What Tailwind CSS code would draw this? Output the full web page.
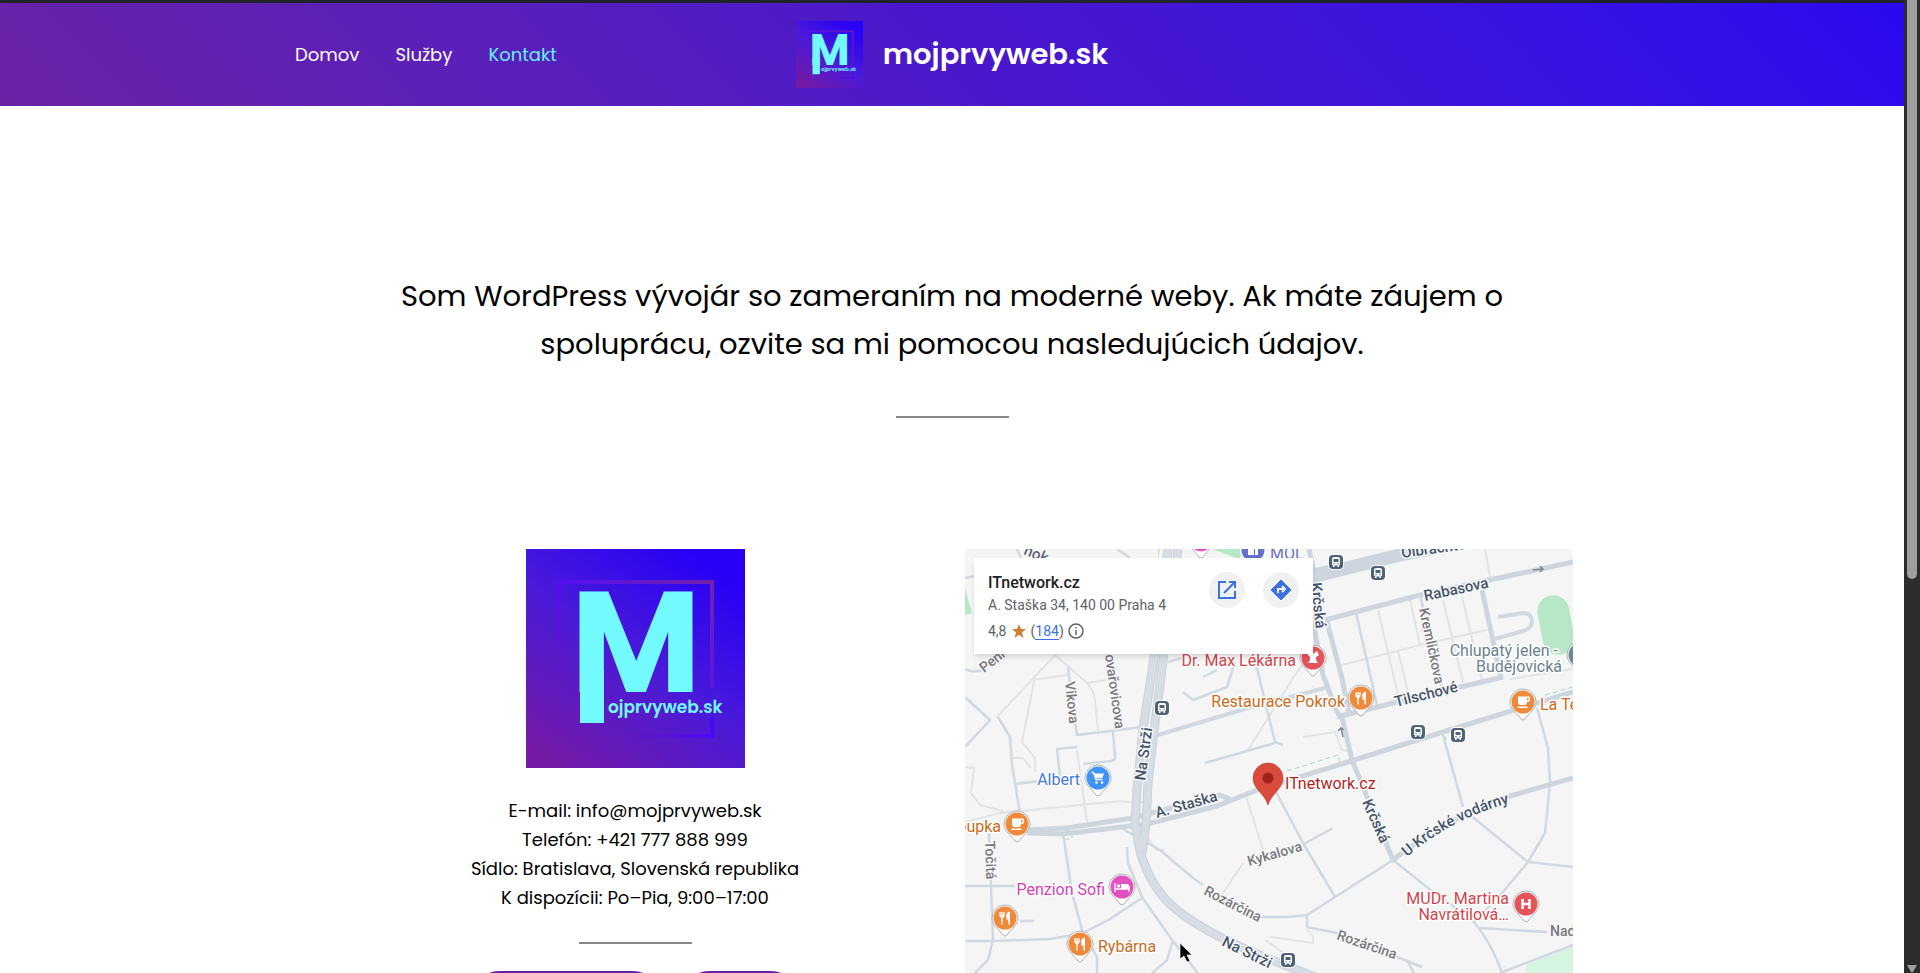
<!DOCTYPE html>
<html lang="sk">
<head>
  <meta charset="UTF-8">
  <meta name="viewport" content="width=device-width, initial-scale=1.0">
  <title>Kontakt – mojprvyweb.sk</title>
  <!-- Tailwind CSS -->
  <script src="https://cdn.jsdelivr.net/npm/@tailwindcss/browser@4"></script>
</head>
<body class="flex h-screen overflow-hidden bg-white text-black font-[Poppins,Inter,sans-serif]">

  <!-- Logo a ikony mapy -->
  <svg class="absolute size-0" aria-hidden="true">
    <defs>
      <linearGradient id="logoBg" x1="0.15" y1="1" x2="0.85" y2="0">
        <stop offset="0" stop-color="#741aa6"/>
        <stop offset="0.5" stop-color="#4a1ad8"/>
        <stop offset="0.95" stop-color="#2800f6"/>
      </linearGradient>
      <linearGradient id="frameTop" gradientUnits="userSpaceOnUse" x1="31" y1="0" x2="188" y2="0">
        <stop offset="0" stop-color="#540cf6"/>
        <stop offset="1" stop-color="#7422a8"/>
      </linearGradient>
      <linearGradient id="frameRight" gradientUnits="userSpaceOnUse" x1="0" y1="31" x2="0" y2="139">
        <stop offset="0" stop-color="#7422a8"/>
        <stop offset="1" stop-color="#5c14e0"/>
      </linearGradient>
      <linearGradient id="frameLeft" gradientUnits="userSpaceOnUse" x1="0" y1="31" x2="0" y2="165">
        <stop offset="0" stop-color="#540cf6"/>
        <stop offset="1" stop-color="#6a1cb4" stop-opacity="0"/>
      </linearGradient>
      <linearGradient id="frameBottom" gradientUnits="userSpaceOnUse" x1="60" y1="0" x2="188" y2="0">
        <stop offset="0" stop-color="#6a1cb4" stop-opacity="0"/>
        <stop offset="1" stop-color="#4a08fa"/>
      </linearGradient>

      <symbol id="logo" viewBox="0 0 219 219">
        <rect width="219" height="219" fill="url(#logoBg)"/>
        <rect x="31" y="31" width="4" height="134" fill="url(#frameLeft)"/>
        <rect x="31" y="31" width="157" height="4" fill="url(#frameTop)"/>
        <rect x="184" y="31" width="4" height="108" fill="url(#frameRight)"/>
        <rect x="184" y="168" width="4" height="21" fill="#4a08fa"/>
        <rect x="60" y="185" width="128" height="4" fill="url(#frameBottom)"/>
        <text x="110" y="143" font-family="Poppins, Inter, sans-serif" font-size="142" font-weight="700" text-anchor="middle" fill="#73faff">M</text>
        <rect x="54" y="120" width="24" height="54" fill="#73faff"/>
        <text x="82" y="164" font-family="Poppins, Inter, sans-serif" font-size="17" font-weight="600" fill="#73faff">ojprvyweb.sk</text>
      </symbol>

      <symbol id="bus" viewBox="-9 -9 18 18" overflow="visible">
        <rect x="-8" y="-8" width="16" height="16" rx="5" fill="#fff"/>
        <rect x="-7" y="-7" width="14" height="14" rx="4" fill="#4d6177"/>
        <path d="M-4 3V-3Q-4-5-2-5H2Q4-5 4-3V3H3V5H1.5V3.5H-1.5V5H-3V3Z" fill="#fff"/>
        <path d="M-2.5-3H2.5V0H-2.5Z" fill="#4d6177"/>
        <circle cx="-2" cy="1.8" r=".7" fill="#4d6177"/>
        <circle cx="2" cy="1.8" r=".7" fill="#4d6177"/>
      </symbol>
      <symbol id="pin" viewBox="-14 -14 28 34" overflow="visible">
        <path d="M-13 0A13 13 0 1 1 13 0C13 7 6 11 2 17Q0 19-2 17C-6 11-13 7-13 0Z" fill="#fff" stroke="#a4a8ac" stroke-width=".9"/>
        <circle r="11.5" fill="currentColor"/>
      </symbol>
      <symbol id="fork" viewBox="-8 -8 16 16" overflow="visible">
        <path d="M-5-6V-2.500M-3-6V0M-1-6V-2.500M-3 0V6.500" fill="none" stroke="#fff" stroke-width="1.300"/>
        <path d="M-5.600-3H-.4Q-.4 0-3 0T-5.600-3ZM5-6.500V6.500H3.400V1.500H1.300V-3Q1.500-6 5-6.500Z" fill="#fff"/>
      </symbol>
      <symbol id="cup" viewBox="-8 -8 16 16" overflow="visible">
        <path d="M-5-5.500H6Q7-5.500 7-4V-2Q7 0 4 0Q4 3 1.500 3H-2.500Q-5 3-5 0ZM4-4V-1.500H5.500V-4ZM-5.500 4.500H4.500V6H-5.500Z" fill="#fff" fill-rule="evenodd"/>
      </symbol>
    </defs>
  </svg>

  <div class="flex min-w-0 flex-1 flex-col overflow-hidden border-t-3 border-[#20242a]">
    <header class="shrink-0 bg-linear-45 from-[#6b21a6] via-[#4a17cb] to-[#2a08f0]">
      <div class="mx-auto grid h-[103px] max-w-[1314px] grid-cols-[1fr_auto_1fr] items-center">
        <nav class="flex gap-9 text-lg text-white">
          <a href="#domov">Domov</a>
          <a href="#sluzby">Služby</a>
          <a href="#kontakt" class="text-[#66f0f5]" aria-current="page">Kontakt</a>
        </nav>
        <a href="#domov" class="flex items-center gap-5 text-[29px] font-semibold text-white">
          <svg class="size-[67px]" aria-hidden="true"><use href="#logo"/></svg>
          mojprvyweb.sk
        </a>
      </div>
    </header>

    <main class="mx-auto w-full max-w-[1242px] pt-[166px]">
      <p class="mx-auto max-w-[1160px] text-center text-[29px] leading-12">Som WordPress vývojár so zameraním na moderné weby. Ak máte záujem o spoluprácu, ozvite sa mi pomocou nasledujúcich údajov.</p>
      <hr class="mx-auto mt-12 w-[113px] border-t-2 border-[#888]">

      <div class="mt-[131px] grid grid-cols-2 gap-[26px]">
        <section class="text-center">
          <svg class="mx-auto size-[219px]" role="img" aria-label="Logo"><use href="#logo"/></svg>
          <p class="mt-7 text-lg leading-[29px]">
            E-mail: info@mojprvyweb.sk<br>
            Telefón: +421 777 888 999<br>
            Sídlo: Bratislava, Slovenská republika<br>
            K dispozícii: Po–Pia, 9:00–17:00
          </p>
          <hr class="mx-auto mt-[30px] w-[113px] border-t-2 border-[#888]">
          <div class="mt-[27px] flex justify-center gap-5">
            <button type="button" aria-label="E-mail" class="h-14 w-[190px] rounded-full bg-[#6b21a6]"></button>
            <button type="button" aria-label="Telefón" class="h-14 w-[118px] rounded-full bg-[#6b21a6]"></button>
          </div>
        </section>

        <section class="relative overflow-hidden bg-[#f5f5f5] font-[Roboto,sans-serif]">
          <svg class="block w-full" viewBox="0 0 608 450" role="img" aria-label="Mapa">
            <!-- Parky -->
            <g fill="#b6e7c6">
              <path d="M247 0H280L274 10ZM0 39L7 64L0 66ZM193 0H195L193 10Z"/>
              <rect x="575" y="46" width="32" height="60" rx="16" transform="rotate(-11 591 76)"/>
              <path d="M561 416L608 397V450H561Z" fill="#d5f5e1"/>
            </g>

            <!-- Chodníky a malé uličky -->
            <g fill="none" stroke="#e2e3e5" stroke-width="2">
              <path d="M90 106L32 168M90 106L122 134Q129 142 130 151L133 181M65 131L103 126M70 128L57 193L70 209V223M122 134L148 130M0 218L9 219L6 244L15 256L38 262M48 209L58 209L66 219"/>
              <path d="M0 273L35 264L95 258L155 252L175 254M112 201L122 273M280 244L298 301M258 344L278 314M283 201L328 129L342 109M178 284L192 301L199 301"/>
              <path d="M413 61L433 146M445 51L455 96M478 51L498 133M497 48L518 135M377 116L455 96L522 81M433 102L443 143M520 0L525 28M455 82L458 81"/>
              <path d="M338 188L370 183L377 201L384 202M305 388L348 394Q350 387 342 380M300 391L330 412M608 120L545 130"/>
            </g>

            <!-- Vedľajšie ulice -->
            <g fill="none" stroke="#d0d9e2" stroke-width="2.500" stroke-linejoin="round">
              <path d="M33 168L45 188L47 216L55 264M0 148L25 171L0 198M0 120Q8 125 20 120M0 29L9 27M52 0L56 9M66 0L78 9M152 0L165 9"/>
              <path d="M103 119L112 186L177 178M148 183L150 209Q150 211 146 212L118 215M112 198L92 200L95 228M50 235L75 232"/>
              <path d="M24 284L28 391L23 411L10 424M0 337H50M0 392H28L85 390L108 386M55 372H69M98 284L107 344L118 384L132 408V450M118 384L145 370L177 349"/>
              <path d="M162 298L163 314L177 348L205 388L245 440M208 391L202 411L185 426M158 280L195 301L228 329L238 336M293 368H322L342 366L428 311"/>
              <path d="M203 113L217 109M238 128L252 121M270 113L262 138L228 151L218 143M290 111L310 193L318 196M240 214L310 194"/>
              <path d="M391 64L412 156M310 241L338 294L370 348M337 296L368 279M342 366V378L372 384L457 418M442 411L452 430"/>
              <path d="M478 186L498 258M505 266L563 313L608 318M563 313L538 343L508 374M572 159L583 199L585 234L580 284L563 313M428 311L468 343L505 369Q525 390 537 424V450M515 379L582 383M535 424L608 396M455 46L477 139"/>
              <path d="M193 186L283 159L360 139" stroke-width="4"/>
              <path d="M533 68L558 64Q567 64 567 73Q566 80 558 82L530 90" stroke-width="4"/>
            </g>

            <!-- Hlavné ulice -->
            <g fill="none" stroke="#cdd6df" stroke-width="6" stroke-linejoin="round">
              <path d="M62 281L102 279L168 269L255 246L265 250M62 284L98 285L182 275L252 257L292 241L383 213L478 183L608 143" stroke-width="5"/>
              <path d="M344 0L352 36L350 83L358 126L372 163L377 168M362 73L377 129L384 165M377 168L387 211L428 311L442 300L502 264L538 249L608 229M360 71L455 46L608 13M372 168L432 153L538 128M517 41L536 129M102 278V286" stroke-width="5"/>
              <path d="M343 24L382 16L470-6M343 32L435 9L500-4" stroke-width="7"/>
            </g>

            <!-- Na Strži -->
            <g fill="none" stroke-linejoin="round">
              <path d="M203 0L188 116L178 180L172 240L170 275L175 302Q184 334 204 354Q234 383 312 413L370 436M213 0L198 112L188 190L183 235L181 275L177 304" stroke="#c8d0d9" stroke-width="9"/>
              <path d="M203 0L188 116L178 180L172 240L170 275L175 302Q184 334 204 354Q234 383 312 413L370 436M213 0L198 112L188 190L183 235L181 275L177 304" stroke="#d7dde5" stroke-width="7"/>
            </g>
            <path d="M322 222L373 206L375 214M580 146L608 138M481 191L480 187M100 290H107V287M175 253H177" fill="none" stroke="#a5d9bf" stroke-dasharray="5 3"/>
            <path d="M568 21L578 20M575 17L578 20L575 23M378 188L376 179M373 182L376 179L379 181" fill="none" stroke="#7b8794" stroke-width="1.500"/>

            <!-- Názvy ulíc -->
            <g font-size="14" font-weight="500" fill="#78797d" stroke="#f7f7f7" stroke-width="3" paint-order="stroke" stroke-linejoin="round">
              <text x="19" y="124" transform="rotate(-38 19 124)">Peni</text>
              <text x="100" y="133" transform="rotate(84 100 133)">Vikova</text>
              <text x="140" y="106" transform="rotate(82 140 106)">ovařovicova</text>
              <text x="20" y="292" transform="rotate(88 20 292)">Točitá</text>
              <text x="284" y="317" transform="rotate(-16 284 317)">Kykalova</text>
              <text x="238" y="345" transform="rotate(27 238 345)">Rozárčina</text>
              <text x="371" y="390" transform="rotate(19 371 390)">Rozárčina</text>
              <text x="454" y="60" transform="rotate(78 454 60)">Kremličkova</text>
              <text x="585" y="387">Nad</text>
            </g>
            <g font-size="15" font-weight="500" fill="#44546a" stroke="#f7f7f7" stroke-width="3" paint-order="stroke" stroke-linejoin="round">
              <text x="58" y="5" transform="rotate(22 58 5)" fill="#5b6470">nok</text>
              <text x="180" y="232" transform="rotate(-82 180 232)">Na Strži</text>
              <text x="192" y="269" transform="rotate(-16 192 269)">A. Staška</text>
              <text x="256" y="396" transform="rotate(26 256 396)">Na Strži</text>
              <text x="346" y="34" transform="rotate(84 346 34)">Krčská</text>
              <text x="397" y="253" transform="rotate(66 397 253)">Krčská</text>
              <text x="437" y="9" transform="rotate(-8 437 9)">Olbrachtova</text>
              <text x="460" y="52" transform="rotate(-12 460 52)">Rabasova</text>
              <text x="431" y="158" transform="rotate(-14 431 158)">Tilschové</text>
              <path id="vodarny" d="M442 308Q488 268 552 252" fill="none" stroke="none"/>
              <text><textPath href="#vodarny">U Krčské vodárny</textPath></text>
            </g>

            <!-- Zastávky -->
            <g>
              <use href="#bus" x="188" y="150" width="18" height="18"/>
              <use href="#bus" x="362" y="4" width="18" height="18"/>
              <use href="#bus" x="404" y="15" width="18" height="18"/>
              <use href="#bus" x="444" y="174" width="18" height="18"/>
              <use href="#bus" x="484" y="177" width="18" height="18"/>
              <use href="#bus" x="314" y="402" width="18" height="18"/>
            </g>

            <!-- Podniky -->
            <g font-size="16" stroke="#fff" stroke-width="3" paint-order="stroke" stroke-linejoin="round">
              <text x="331" y="117" text-anchor="end" fill="#d3444c">Dr. Max Lékárna</text>
              <text x="380" y="158" text-anchor="end" fill="#cc6a22">Restaurace Pokrok</text>
              <text x="115" y="236" text-anchor="end" fill="#4279e0">Albert</text>
              <text x="36" y="283" text-anchor="end" fill="#cc6a22">Chaloupka</text>
              <text x="140" y="346" text-anchor="end" fill="#d33fb8">Penzion Sofi</text>
              <text x="133" y="403" fill="#cc6a22">Rybárna</text>
              <text x="320" y="240" fill="#b3261e">ITnetwork.cz</text>
              <text x="593" y="107" text-anchor="end" fill="#6a7f8e"><tspan>Chlupatý jelen -</tspan><tspan x="597" dy="16">Budějovická</tspan></text>
              <text x="575" y="161" fill="#cc6a22">La Terrazza</text>
              <text x="544" y="355" text-anchor="end" fill="#d3444c"><tspan>MUDr. Martina</tspan><tspan x="544" dy="16">Navrátilová…</tspan></text>
              <text x="305" y="10" fill="#6670c8">MOL</text>
            </g>
            <g transform="translate(348 109)" color="#e5535b"><use href="#pin" x="-14" y="-14" width="28" height="34"/><path d="M-6-4L-3-6L0-4L4-7L6-3L3-1V2L5 5H-5L-3 2V-1Z" fill="#fff"/></g>
            <g transform="translate(396 149)" color="#ef8a3c"><use href="#pin" x="-14" y="-14" width="28" height="34"/><use href="#fork" x="-8" y="-8" width="16" height="16"/></g>
            <g transform="translate(558 153)" color="#ef8a3c"><use href="#pin" x="-14" y="-14" width="28" height="34"/><use href="#cup" x="-8" y="-8" width="16" height="16"/></g>
            <g transform="translate(133 229)" color="#3f93f5"><use href="#pin" x="-14" y="-14" width="28" height="34"/><path d="M-6.500-5.500H-4.500L-2 1.500H4.500" fill="none" stroke="#fff" stroke-width="1.400"/><path d="M-4-4.500H6L4.300 0H-2.500Z" fill="#fff"/><circle cx="-1.500" cy="4.500" r="1.300" fill="#fff"/><circle cx="4" cy="4.500" r="1.300" fill="#fff"/></g>
            <g transform="translate(52 275)" color="#ef8a3c"><use href="#pin" x="-14" y="-14" width="28" height="34"/><use href="#cup" x="-8" y="-8" width="16" height="16"/></g>
            <g transform="translate(157 338)" color="#e251bf"><use href="#pin" x="-14" y="-14" width="28" height="34"/><path d="M-7-4V5M7-1V5M-7 2H7" fill="none" stroke="#fff" stroke-width="1.300"/><path d="M-1-3H5Q7-3 7-1V2H-1Z" fill="#fff"/><circle cx="-3.500" cy="-1" r="1.700" fill="#fff"/></g>
            <g transform="translate(40 369)" color="#ef8a3c"><use href="#pin" x="-14" y="-14" width="28" height="34"/><use href="#fork" x="-8" y="-8" width="16" height="16"/></g>
            <g transform="translate(115 395)" color="#ef8a3c"><use href="#pin" x="-14" y="-14" width="28" height="34"/><use href="#fork" x="-8" y="-8" width="16" height="16"/></g>
            <g transform="translate(561 355)" color="#e5535b"><use href="#pin" x="-14" y="-14" width="28" height="34"/><path d="M-3.500-5V5M3.500-5V5M-3.500 0H3.500" stroke="#fff" stroke-width="2.500"/></g>
            <g transform="translate(615 106)" color="#6f8794"><use href="#pin" x="-14" y="-14" width="28" height="34"/></g>
            <g transform="translate(236 -9)" color="#e251bf"><use href="#pin" x="-14" y="-14" width="28" height="34"/></g>
            <g transform="translate(288 1)"><circle r="13" fill="#fff"/><circle r="11.500" fill="#6670c8"/><path d="M-5-4H1V5H-5ZM2-1H5V5H2Z" fill="#fff"/></g>

            <!-- ITnetwork.cz -->
            <path d="M303 256C300 245 288 240 288 229A15 15 0 0 1 318 229C318 240 306 245 303 256Z" fill="#da4a3d" stroke="#b93a30" stroke-width=".6"/>
            <circle cx="303" cy="229" r="5.500" fill="#a1241b"/>
            <path d="M215 394V410L219 407L222 413L225 412L222 406H227Z" fill="#000" stroke="#fff" stroke-width=".7"/>
          </svg>

          <!-- Karta s adresou -->
          <div class="absolute top-[9px] left-[9px] flex h-24 w-[339px] justify-between bg-white py-3.5 pr-3.5 pl-3.5 shadow-md">
            <div class="text-sm text-[#5f6368]">
              <h2 class="text-base leading-[22px] font-medium text-[#202124]">ITnetwork.cz</h2>
              <p class="leading-[22px]">A. Staška 34, 140 00 Praha 4</p>
              <p class="mt-[5px] flex items-center gap-1">4,8
                <svg class="size-4" viewBox="0 0 16 16" fill="#cf7f35"><path d="M8 1L10 6H15L11 9.500L12.500 15L8 11.700L3.500 15L5 9.500L1 6H6Z"/></svg>
                <span>(<a href="#recenzie" class="border-b border-[#3b71e0] text-[#3b71e0]">184</a>)</span>
                <svg class="size-4" viewBox="0 0 16 16" fill="none" stroke="#5f6368" stroke-width="1.500"><circle cx="8" cy="8" r="7"/><path d="M8 7V12M8 4V5.500"/></svg>
              </p>
            </div>
            <div class="flex gap-[18px]">
              <a href="#mapa" aria-label="Otvoriť mapu" class="flex size-9 items-center justify-center rounded-full bg-[#f1f1f1]">
                <svg class="size-[18px]" viewBox="0 0 18 18" fill="none" stroke="#3b71e0" stroke-width="2"><path d="M8 1H1V17H17V10M11 1H17V7M17 1L6 12"/></svg>
              </a>
              <a href="#trasa" aria-label="Trasa" class="flex size-9 items-center justify-center rounded-full bg-[#f1f1f1]">
                <svg class="size-5" viewBox="0 0 20 20"><path d="M10 0L20 10L10 20L0 10Z" fill="#3b71e0" stroke="#3b71e0" stroke-linejoin="round"/><path d="M7 13V9H13M11 6L14 9L11 12" fill="none" stroke="#fff" stroke-width="1.800"/></svg>
              </a>
            </div>
          </div>
        </section>
      </div>
    </main>
  </div>

  <!-- Posuvník -->
  <div class="flex w-4 shrink-0 flex-col items-center justify-between bg-[#2c2c2c]" aria-hidden="true">
    <div class="h-[59.5%] w-2.5 rounded-b-full bg-[#9f9f9f]"></div>
    <svg class="h-2 w-2.5" viewBox="0 0 10 8"><path d="M0 0H10L6 7H4Z" fill="#9f9f9f"/></svg>
  </div>
</body>
</html>
